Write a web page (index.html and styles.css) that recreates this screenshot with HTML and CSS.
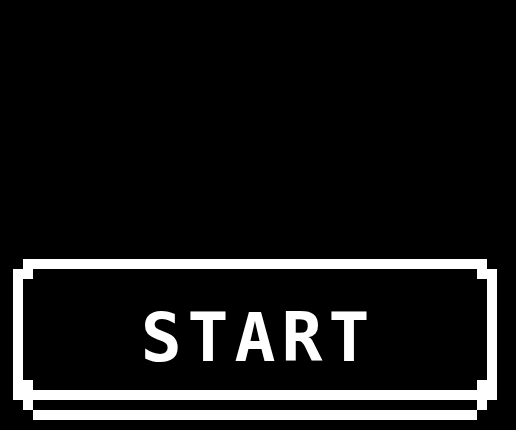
FILE: index.html
```html
<!DOCTYPE html>
<html>
<head>
<title>Start</title>
<link rel="stylesheet" href="styles.css">
</head>
<body>
  <div class="screen">
    <button class="start-button">
      <span class="face"><span class="label">START</span></span>
      <span class="base"></span>
      <span class="step"></span>
      <span class="shelf"></span>
    </button>
  </div>
</body>
</html>
```

FILE: styles.css
```css
body{
  margin: 0;
  background-color: black;
}
.screen{
  height: 430px;
  box-sizing: border-box;
  display: flex;
  flex-direction: column;
  justify-content: flex-end;
  padding-bottom: 10px;
}
.start-button{
  display: block;
  width: 484px;
  margin-left: 13px;
  padding: 0;
  border: 0;
  background-color: black;
  cursor: pointer;
}
/* main box, bars drawn with hard shadows so the outer corners stay cut */
.face{
  position: relative;
  display: flex;
  justify-content: center;
  align-items: center;
  box-sizing: border-box;
  height: 121px;
  margin: 10px 10px 0;
  padding-top: 17px;
  background-color: black;
  box-shadow:
    0 -10px 0 0 white,
    -10px 0 0 0 white,
    10px 0 0 0 white,
    -10px 10px 0 0 white,
    10px 10px 0 0 white;
}
/* inner corner pixels */
.face::before{
  content: '';
  position: absolute;
  left: 0;
  top: 0;
  width: 10px;
  height: 10px;
  background-color: white;
  box-shadow:
    454px 0 0 0 white,
    0 111px 0 0 white,
    454px 111px 0 0 white;
}
.label{
  font-family: "DejaVu Sans Mono", monospace;
  font-weight: bold;
  font-size: 68px;
  line-height: 1;
  letter-spacing: 6px;
  padding-left: 6px;
  color: white;
}
.base{
  display: block;
  height: 10px;
  margin: 0 20px;
  background-color: white;
}
.step{
  display: block;
  height: 10px;
  margin: 0 10px;
  border-left: 10px solid white;
  border-right: 10px solid white;
}
.shelf{
  display: block;
  height: 10px;
  margin: 0 20px;
  background-color: white;
}
```
